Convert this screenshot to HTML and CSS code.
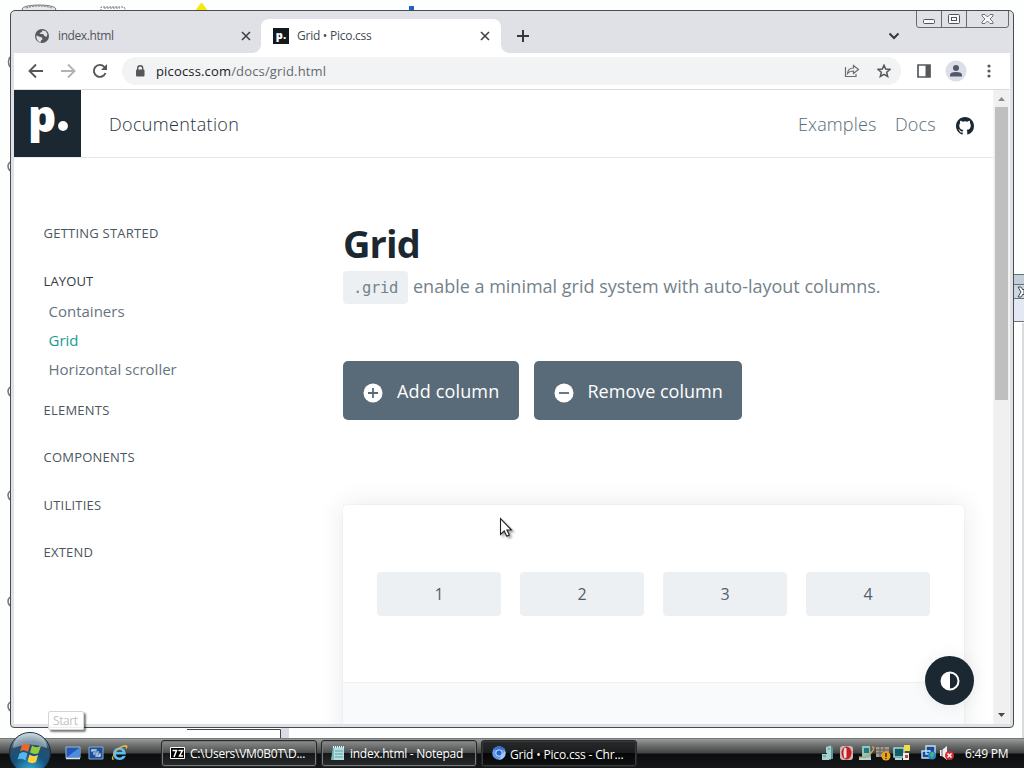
FILE: index.html
```
<!DOCTYPE html>
<html lang="en">
<head>
<meta charset="utf-8">
<title>Grid • Pico.css</title>
<link rel="stylesheet" href="styles.css">
</head>
<body>
<div class="desktop">
  <svg class="desk-art" width="1024" height="738" viewBox="0 0 1024 738">
    <g fill="none" stroke="#777" stroke-width="1"><ellipse cx="39" cy="9" rx="17" ry="4" fill="#e8eaea"/><path d="M26 8q13-4 26 0M101 11V7h23l2 4M104 8h16" stroke-dasharray="2 1"/></g>
    <path d="M195 11l5-7q1.500-2 3 0l5 7z" fill="#f5e80c"/><path d="M409 6h5v5h-5z" fill="#2463c4"/>
    <g fill="none" stroke="#777" stroke-width="1.500"><path d="M10 57q-3 5 0 10M10 162q-4 4 0 9M10 387q-4 4 0 9M10 491q-4 4 0 9M10 597q-4 4 0 9M10 702q-4 4 0 9"/></g>
    <path d="M1012 274h12v48h-12z" fill="#e4e7f4"/><path d="M1012 275h12v9h-12z" fill="#c3ced8"/><path d="M1012 285h12v13h-12z" fill="#cdd7df"/>
    <path d="M1012 274.500h12M1012 284.500h12M1012 298.500h12M1012 321.500h12" stroke="#68727b"/><path d="M1018 287h3l2 3 1-1v6l-1-1-2 3h-3l3-5z" fill="#fff" stroke="#445"/>
    <path d="M1022 323h2v415h-2z" fill="#d9dadc"/>
    <path d="M187 729.500h93.500V738" fill="none" stroke="#444"/><path d="M281 728h8v10h-8z" fill="#d9dce3"/>
  </svg>

  <main class="window">
    <div class="tabs">
      <div class="tab">
        <svg width="16" height="16" viewBox="0 0 16 16"><circle cx="8" cy="8" r="7" fill="#55595d"/><path d="M2.500 7.500 5 8.500l3 1 .5 2-1.500 1-.5 2C4 13.500 2 11 2.500 7.500zM8 2.500l3.500.5 2 3-1 3-2-1-1.500-2H6.500L5.500 5 8 4z" fill="#dee1e6"/></svg>
        <span class="tab-title t-index">index.html</span>
        <svg class="close" width="10" height="10" viewBox="0 0 10 10"><path d="M1 1l8 8M9 1L1 9"/></svg>
      </div>
      <div class="tab active">
        <span class="fav">p.</span>
        <span class="tab-title t-grid">Grid • Pico.css</span>
        <svg class="close" width="10" height="10" viewBox="0 0 10 10"><path d="M1 1l8 8M9 1L1 9"/></svg>
      </div>
      <svg class="plus" width="12" height="12" viewBox="0 0 12 12"><path d="M6 0v12M0 6h12"/></svg>
      <svg class="chev" width="12" height="8" viewBox="0 0 12 8"><path d="M1.500 1.500 6 6l4.500-4.500"/></svg>
    </div>
    <svg class="caption" width="94" height="18" viewBox="0 0 94 18"><path d="M.5 0v14q0 2.500 2.500 2.500h87q2.500 0 2.500-2.500V0M25.500 0v16M50.500 0v16" fill="none" stroke="#666b72"/><g fill="#f7f8fa" stroke="#50545a"><rect x="7.500" y="8.500" width="11" height="4" rx="1"/><rect x="32.500" y="3.500" width="11" height="9" rx="1"/><rect x="35.500" y="6.500" width="5" height="3"/><path d="M66 3.500h3l2.500 2.500 2.500-2.500h3v1.500l-3 3 3 3v1.500h-3l-2.500-2.500-2.500 2.500h-3v-1.500l3-3-3-3z" stroke-width=".8"/></g></svg>

    <div class="toolbar">
      <svg width="16" height="16" viewBox="0 0 16 16"><path d="M15 8H2M8 1.500 1.500 8 8 14.500" class="ln"/></svg>
      <svg class="fwd" width="16" height="16" viewBox="0 0 16 16"><path d="M1 8h13M8 1.500 14.500 8 8 14.500" class="ln"/></svg>
      <svg width="16" height="16" viewBox="0 0 16 16"><path d="M13.500 10A6 6 0 1 1 12.300 3.800L14 5.500" class="ln"/><path d="M15 1v6H9z" fill="#55585b"/></svg>
      <div class="omni">
        <svg width="10" height="12" viewBox="0 0 10 12"><rect x="1" y="4.500" width="8.500" height="7" rx="1" fill="#55585b"/><path d="M2.700 5V3.200a2.500 2.500 0 0 1 5 0V5" fill="none" stroke="#55585b" stroke-width="1.400"/></svg>
        <span class="url">picocss.com<i>/docs/grid.html</i></span>
        <svg class="share" width="16" height="14" viewBox="0 0 16 14"><path d="M1.500 3v9.500h10.500V10M3.500 9.500q.5-5.500 6-5.500V1.500L14.500 5.500l-5 4V7Q5.500 7 3.500 9.500z"/></svg>
        <svg class="star" width="14" height="14" viewBox="0 0 14 14"><path d="M7 1.200l1.700 3.900 4.200.4-3.200 2.800 1 4.200L7 10.300l-3.700 2.200 1-4.200L1.100 5.500l4.200-.4z"/></svg>
      </div>
      <svg class="panel" width="14" height="14" viewBox="0 0 14 14"><path d="M1 1h12v12H1z" fill="none" stroke="#55585b" stroke-width="1.700"/><path d="M8.500 1H13v12H8.500z" fill="#55585b"/></svg>
      <svg class="user" width="22" height="22" viewBox="0 0 22 22"><circle cx="11" cy="11" r="10.500" fill="#dcdfe7"/><circle cx="11" cy="8" r="3" fill="#51586a"/><path d="M5 16.500v-1.500q0-3 6-3t6 3v1.500z" fill="#51586a"/></svg>
      <svg class="dots" width="4" height="14" viewBox="0 0 4 14"><circle cx="2" cy="2" r="1.600"/><circle cx="2" cy="7" r="1.600"/><circle cx="2" cy="12" r="1.600"/></svg>
    </div>

    <div class="view">
      <div class="page">
        <header class="nav">
          <div class="logo"><b>p</b><svg width="10" height="10" viewBox="0 0 10 10"><circle cx="5" cy="5" r="4.900" fill="#fff"/></svg></div>
          <span class="doc">Documentation</span>
          <a class="ex">Examples</a><a class="docs">Docs</a>
          <svg class="gh" width="18" height="18" viewBox="0 0 16 16"><path fill="#1b2832" d="M8 0C3.580 0 0 3.580 0 8c0 3.540 2.290 6.530 5.470 7.590.4.070.55-.17.55-.38 0-.19-.01-.82-.01-1.490-2.010.37-2.530-.49-2.690-.94-.09-.23-.48-.94-.82-1.130-.28-.15-.68-.52-.01-.53.63-.01 1.080.58 1.230.82.72 1.210 1.870.87 2.330.66.07-.52.28-.87.51-1.070-1.780-.2-3.640-.89-3.640-3.950 0-.87.31-1.590.82-2.150-.08-.2-.36-1.020.08-2.120 0 0 .67-.21 2.200.82a7.500 7.500 0 0 1 4 0c1.530-1.040 2.200-.82 2.200-.82.44 1.100.16 1.920.08 2.120.51.56.82 1.270.82 2.150 0 3.070-1.870 3.750-3.650 3.950.29.25.54.73.54 1.480 0 1.070-.01 1.930-.01 2.200 0 .21.15.46.55.38A8 8 0 0 0 16 8c0-4.420-3.580-8-8-8z"/></svg>
        </header>
        <div class="body">
          <aside class="side">
            <p>Getting started</p>
            <p class="open">Layout</p>
            <ul><li>Containers</li><li class="on">Grid</li><li>Horizontal scroller</li></ul>
            <p>Elements</p>
            <p>Components</p>
            <p>Utilities</p>
            <p>Extend</p>
          </aside>
          <section class="content">
            <h1>Grid</h1>
            <div class="lead"><code>.grid</code><span>enable a minimal grid system with auto-layout columns.</span></div>
            <div class="buttons">
              <div class="btn add"><svg width="20" height="20" viewBox="0 0 20 20"><circle cx="10" cy="10" r="9.500" fill="#fff"/><path d="M10 5v10M5 10h10" stroke="#596b78" stroke-width="1.800"/></svg><span>Add column</span></div>
              <div class="btn rem"><svg width="20" height="20" viewBox="0 0 20 20"><circle cx="10" cy="10" r="9.500" fill="#fff"/><path d="M5 10h10" stroke="#596b78" stroke-width="1.800"/></svg><span>Remove column</span></div>
            </div>
            <article class="card">
              <div class="cells"><div>1</div><div>2</div><div>3</div><div>4</div></div>
              <div class="code"></div>
            </article>
          </section>
        </div>
        <div class="theme"><svg width="20" height="20" viewBox="0 0 20 20"><circle cx="10" cy="10" r="8.500" fill="none" stroke="#fff" stroke-width="2"/><path d="M10 1.500a8.500 8.500 0 0 0 0 17z" fill="#fff"/></svg></div>
      </div>
      <div class="scroll">
        <svg width="15" height="17" viewBox="0 0 15 17"><path d="M4 11l3.500-4L11 11z" fill="#8a8a8a"/></svg>
        <div class="thumb"></div>
        <svg class="down" width="15" height="17" viewBox="0 0 15 17"><path d="M4 6h7l-3.500 4z" fill="#484848"/></svg>
      </div>
    </div>
  </main>

  <svg class="cursor" width="18" height="24" viewBox="0 0 18 24"><path d="M1.500 1.500v16l3.700-3.500 2.600 5.300 2.600-1.300-2.500-5h4.600z" fill="#fff" stroke="#222" stroke-width="1.100"/></svg>
  <div class="tip">Start</div>

  <footer class="taskbar">
    <svg class="orb" width="44" height="38" viewBox="0 0 44 38">
      <defs><radialGradient id="orb" cx=".5" cy=".95" r=".95"><stop offset="0" stop-color="#35b4dd"/><stop offset=".45" stop-color="#16537e"/><stop offset=".75" stop-color="#2c4d68"/><stop offset="1" stop-color="#c3d2d9"/></radialGradient></defs>
      <circle cx="22" cy="21" r="20.500" fill="url(#orb)" stroke="#16283a"/><path d="M5 16a17 15 0 0 1 34 0q-17-7-34 0z" fill="#e5eef2" opacity=".45"/>
      <path d="M14 13q4-3 8 0l-2 7q-4-3-8-.5z" fill="#e8672d"/><path d="M24 13.500q4 3 9 .5l-2.500 7q-4 2-8.500-.5z" fill="#94ca3d"/><path d="M11.500 21.500q4-3 8 0l-2 7q-4-3-8-1z" fill="#57b5ea"/><path d="M21.500 22.500q4 3 8.500.5l-2 7q-4 2.500-8.500-.5z" fill="#ffd13e"/>
    </svg>
    <svg class="ql" width="64" height="18" viewBox="0 0 64 18">
      <path d="M1 3h14v11H1z" fill="#2457b6" stroke="#93b9d4"/><path d="M2 13 14 4v9z" fill="#4c8bdd"/><path d="M1 14.500h14" stroke="#d8e5ea" stroke-width="1.500"/>
      <path d="M24 3h14v12H24z" fill="#1a4d9b" stroke="#89aacc"/><path d="M26 5h6v3h-6zM30 9h6v4h-6zM28 7h6v4h-6z" fill="#d4e8fa" stroke="#2c5c9c" stroke-width=".7"/>
      <path d="M61 10.500H51q.5 3 3.500 3 2 0 3-1.500h3.200q-1.700 4-6.200 4-6.500-.5-6.500-6.500 .5-6 6.500-6t6.500 7zM51 8h6.500q-.5-2.300-3-2.300T51 8z" fill="#5abdf2"/><path d="M48 16q-3-1 2-8t11-7q3 1 0 4.500Q62 2 58 3q-6 2-9 8-2 4 .5 4z" fill="#f0bd38"/>
    </svg>
    <div class="task k1"><svg width="16" height="14" viewBox="0 0 16 14"><path d="M.5 1.500h14v11H.5z" fill="#000" stroke="#fff"/><path d="M2.500 4.500h4L4 11M8.500 4.500h4L9.500 10h3.500" fill="none" stroke="#fff" stroke-width="1.500"/></svg><span>C:\Users\VM0B0T\D...</span></div>
    <div class="task k2"><svg width="16" height="16" viewBox="0 0 16 16"><path d="M3 2h11l-1 13H1z" fill="#7fb9be"/><path d="M4 3h10v12H4z" fill="#b3dfe0"/><path d="M5 6h8M5 9h8M5 12h8" stroke="#629da6"/><path d="M3 2h11" stroke="#e8f4f4" stroke-width="2" stroke-dasharray="1 1"/></svg><span>index.html - Notepad</span></div>
    <div class="task k3 cur"><svg width="14" height="14" viewBox="0 0 14 14"><circle cx="7" cy="7" r="6.800" fill="#6898ee"/><path d="M1 3.800A7 7 0 0 1 13 3.800L7 4z" fill="#3a6fd2"/><path d="M13 5a7 7 0 0 1-6 9l3-5z" fill="#a9c7fb"/><circle cx="7" cy="7" r="3.200" fill="#2565ce" stroke="#c9defd"/></svg><span>Grid • Pico.css - Chr...</span></div>
    <svg class="tray" width="136" height="18" viewBox="0 0 136 18">
      <path d="M1 10h7v6H1zM5 3l5-1.500v14H6V9H5z" fill="#a5d1d1"/><path d="M2 12h3M7 5h2" stroke="#40878e"/><path d="M10 2l2 1v12h-2z" fill="#5a9397"/>
      <rect x="19" y="2" width="13" height="14" rx="3" fill="#c9b8b8"/><ellipse cx="25.500" cy="9" rx="5" ry="6.500" fill="#c51d22"/><path d="M23.500 3.500q-2 5 0 11l2-1V4z" fill="#f1dede"/>
      <path d="M41 2h8l1 12h-9z" fill="#88c8c6"/><path d="M43 4h5v5h-5z" fill="#277879"/><path d="M38 13q7 2 12-4t1-6" fill="none" stroke="#d89b50" stroke-width="1.500"/><path d="M38 15h12" stroke="#a6dddc" stroke-width="2"/>
      <path d="M55 3h13v10H55z" fill="#a29a8f"/><path d="M55 6h13M55 9h13M59 3v10M63 3v10" stroke="#5f5a54"/><circle cx="65" cy="12" r="4.500" fill="#eda51c"/><path d="M65 9v4M65 14v1" stroke="#442500" stroke-width="1.500"/>
      <path d="M73 4h10v9H73z" fill="#145e63" stroke="#a0dcd8" stroke-width="1.500"/><path d="M83 1h6v6h-6z" fill="#eddf4b"/><path d="M82 9h6v7h-6z" fill="#eee"/><path d="M84 11h3v3h-3z" fill="#c4452e"/><path d="M74 15h7" stroke="#a8e0de" stroke-width="2"/>
      <path d="M105 2h9v8h-9zM101 7h8v7h-8z" fill="#15489f" stroke="#c6e0f4" stroke-width="1.400"/><circle cx="111" cy="11.500" r="4" fill="#2588c9"/><path d="M109 10q3-4 4 0l-2 4z" fill="#56b868"/>
      <path d="M119 6h2l5-4v14l-5-4h-2z" fill="#eee"/><path d="M121 5v8" stroke="#666"/><circle cx="128.500" cy="11.500" r="4.500" fill="#d32b30"/><path d="M126.500 9.500l4 4M130.500 9.500l-4 4" stroke="#fff" stroke-width="1.400"/>
    </svg>
    <span class="clock">6:49 PM</span>
  </footer>
</div>
</body>
</html>
```
FILE: styles.css
```
* { box-sizing: border-box; }
body { margin: 0; overflow: hidden; font-family: "Open Sans", "Noto Sans", sans-serif; }
p, ul, h1 { margin: 0; padding: 0; }
svg { display: block; flex: none; }
span, a, p, li { white-space: nowrap; }

.desktop { position: relative; width: 1024px; height: 768px; background: #fdfefe; overflow: hidden; }
.desk-art { position: absolute; left: 0; top: 0; }

.window { position: absolute; left: 10px; top: 10px; width: 1004px; height: 718px; border: 1px solid #4a4c50; border-radius: 5px 5px 4px 4px; background: #dfe1e6; padding: 0 3px 3px; display: flex; flex-direction: column; }

.tabs { height: 42px; flex: none; display: flex; align-items: flex-end; padding-left: 7px; }
.tab { width: 240px; height: 34px; display: flex; align-items: center; padding: 0 10px 0 13px; color: #50545a; }
.tab.active { position: relative; background: #fff; border-radius: 8px 8px 0 0; padding: 0 11px 0 12px; color: #45494d; }
.tab.active::before, .tab.active::after { content: ""; position: absolute; bottom: 0; width: 8px; height: 8px; }
.tab.active::before { left: -8px; background: radial-gradient(circle at 0 0, transparent 7.5px, #fff 8px); }
.tab.active::after { right: -8px; background: radial-gradient(circle at 100% 0, transparent 7.5px, #fff 8px); }
.tab-title { font-size: 12px; line-height: 16px; margin-left: 8px; }
.t-index { letter-spacing: -.4px; }
.t-grid { letter-spacing: -.25px; }
.close { margin-left: auto; stroke: #3f4347; stroke-width: 1.6; }
.plus { stroke: #34383c; stroke-width: 2; margin: 0 0 11px 16px; }
.chev { margin: 0 110px 13px auto; fill: none; stroke: #34383c; stroke-width: 2; }
.fav { width: 16px; height: 16px; background: #11191f; color: #fff; font: 800 11px/13px "Open Sans", sans-serif; text-align: center; }
.caption { position: absolute; right: 3px; top: 0; }

.toolbar { height: 37px; flex: none; background: #fff; border-bottom: 1px solid #d9dbdd; display: flex; align-items: center; padding-left: 14px; gap: 16px; }
.ln { fill: none; stroke: #55585b; stroke-width: 1.9; }
.fwd { opacity: .45; }
.omni { width: 779px; height: 28px; border-radius: 14px; background: #f1f3f4; display: flex; align-items: center; padding: 0 10px 0 13px; margin-left: -2px; }
.url { font-size: 13px; line-height: 18px; color: #202124; margin-left: 11px; letter-spacing: .16px; }
.url i { font-style: normal; color: #65696d; }
.share { margin-left: auto; fill: none; stroke: #6a6d70; stroke-width: 1.2; }
.star { margin-left: 17px; fill: none; stroke: #55585b; stroke-width: 1.5; }
.panel { margin-left: 0; }
.user { margin-left: -2px; }
.dots { margin-left: 4px; fill: #55585b; }

.view { flex: 1; min-height: 0; display: flex; background: #f4f4f4; }
.page { position: relative; width: 979px; background: #fff; overflow: hidden; color: #415462; }
.nav { height: 68px; border-bottom: 1px solid #e6e9eb; display: flex; align-items: center; font-size: 18px; font-weight: 300; }
.logo { width: 67px; height: 67px; background: #1b2832; color: #fff; display: flex; padding-left: 14px; }
.logo b { font: 800 44px/50px "Open Sans", sans-serif; width: 30px; height: 67px; }
.logo svg { margin: 31px 0 0; }
.doc { margin-left: 28px; width: 132px; color: #25323b; letter-spacing: .35px; }
.nav a { color: #596b78; letter-spacing: .13px; }
.ex { margin-left: auto; width: 78px; }
.docs { margin-left: 19px; width: 42px; }
.gh { margin: 5px 19px 0 19px; }

.body { display: flex; }
.side { width: 329px; padding: 63px 0 0 29.500px; color: #4b565f; }
.side p { font-size: 13px; line-height: 24px; height: 24px; text-transform: uppercase; margin-bottom: 23.500px; letter-spacing: .23px; }
.side .open { margin-bottom: 4px; color: #333c44; letter-spacing: .15px; }
.side ul { list-style: none; margin: 0 0 14px 5px; }
.side li { font-size: 15px; line-height: 29px; color: #66747f; }
.side li.on { color: #1b9a94; }

.content { width: 621px; padding-top: 61px; }
h1 { font-size: 38px; line-height: 48px; font-weight: 700; color: #1b2832; letter-spacing: -.9px; }
.lead { display: flex; align-items: center; height: 34px; margin-top: 3px; font-size: 18px; color: #73828c; }
.lead code { width: 65px; height: 33px; border-radius: 4px; background: #edf0f3; font: 15.500px/35px "DejaVu Sans Mono", monospace; text-align: center; color: #73828c; letter-spacing: -.3px; margin-right: 5px; }
.lead span { margin-top: -2px; }
.buttons { display: flex; gap: 15px; margin-top: 57px; }
.btn { height: 59px; border-radius: 5px; background: #596b78; color: #fff; font-size: 18px; display: flex; align-items: center; padding-left: 19.500px; }
.btn svg { margin: 5px 14.500px 0 0; }
.btn span { margin-top: 0; }
.add { width: 176px; }
.add span { letter-spacing: .15px; }
.rem { width: 208px; }
.rem span { margin-left: -.5px; }
.card { margin-top: 85px; height: 400px; background: #fff; border-radius: 4px; box-shadow: 0 0 26px rgba(27, 40, 50, .1), 0 0 1px rgba(27, 40, 50, .2); }
.cells { height: 177px; display: grid; grid-template-columns: repeat(4, 1fr); gap: 19px; padding: 67px 34px 0; }
.cells div { height: 44px; border-radius: 4px; background: #edf0f3; text-align: center; font-size: 16px; line-height: 44px; color: #52606b; }
.code { height: 223px; background: #f8fafb; border-top: 1px solid #edf0f3; }
.theme { position: absolute; left: 911px; top: 566px; width: 49px; height: 49px; border-radius: 50%; background: #1b2832; display: grid; place-items: center; box-shadow: 0 0 16px rgba(27, 40, 50, .08); }

.scroll { width: 15px; margin-left: 1px; background: #f0f0f0; display: flex; flex-direction: column; }
.thumb { height: 293px; margin: 0 1px; background: #bfbfbf; }
.down { margin-top: auto; }

.cursor { position: absolute; left: 499px; top: 517px; filter: drop-shadow(2px 2px 1px rgba(0, 0, 0, .35)); }
.tip { position: absolute; left: 48px; top: 711px; width: 36px; height: 19px; border: 1px solid #d5d5d5; border-radius: 2px; background: rgba(255, 255, 255, .9); box-shadow: 2px 2px 2px rgba(0, 0, 0, .5); color: #c2c2c6; font-size: 12px; line-height: 17px; padding-left: 4px; letter-spacing: -.4px; }

.taskbar { position: absolute; left: 0; top: 738px; width: 1024px; height: 30px; display: flex; align-items: center; background: linear-gradient(#555 0, #9a9b9b 1px, #6f7171 7px, #434545 15px, #0b0d0e 16px, #151718 29px); color: #fff; font-size: 12px; }
.orb { position: absolute; left: 8px; top: -6px; }
.ql { margin-left: 65px; }
.task { width: 156px; height: 27px; border: 1px solid #252728; border-radius: 3px; box-shadow: inset 0 0 0 1px #777a7a; background: linear-gradient(#8c8e8e, #4c4e4e 48%, #151718 50%, #292c2d); display: flex; align-items: center; padding-left: 8px; margin-left: 4px; }
.task.k1 { margin-left: 32px; }
.task.cur { background: linear-gradient(#292a2b, #1b1c1d 48%, #050606 50%, #111213); box-shadow: inset 0 0 0 1px #393b3b; padding-left: 10px; }
.task svg { margin-right: 4px; }
.task span { line-height: 17px; }
.k1 span { letter-spacing: -.24px; }
.k2 span { letter-spacing: -.27px; }
.k3 span { letter-spacing: -.18px; margin-top: 2px; }
.tray { margin-left: auto; }
.clock { margin: 0 16px 0 8px; width: 43px; letter-spacing: -.2px; }
```
